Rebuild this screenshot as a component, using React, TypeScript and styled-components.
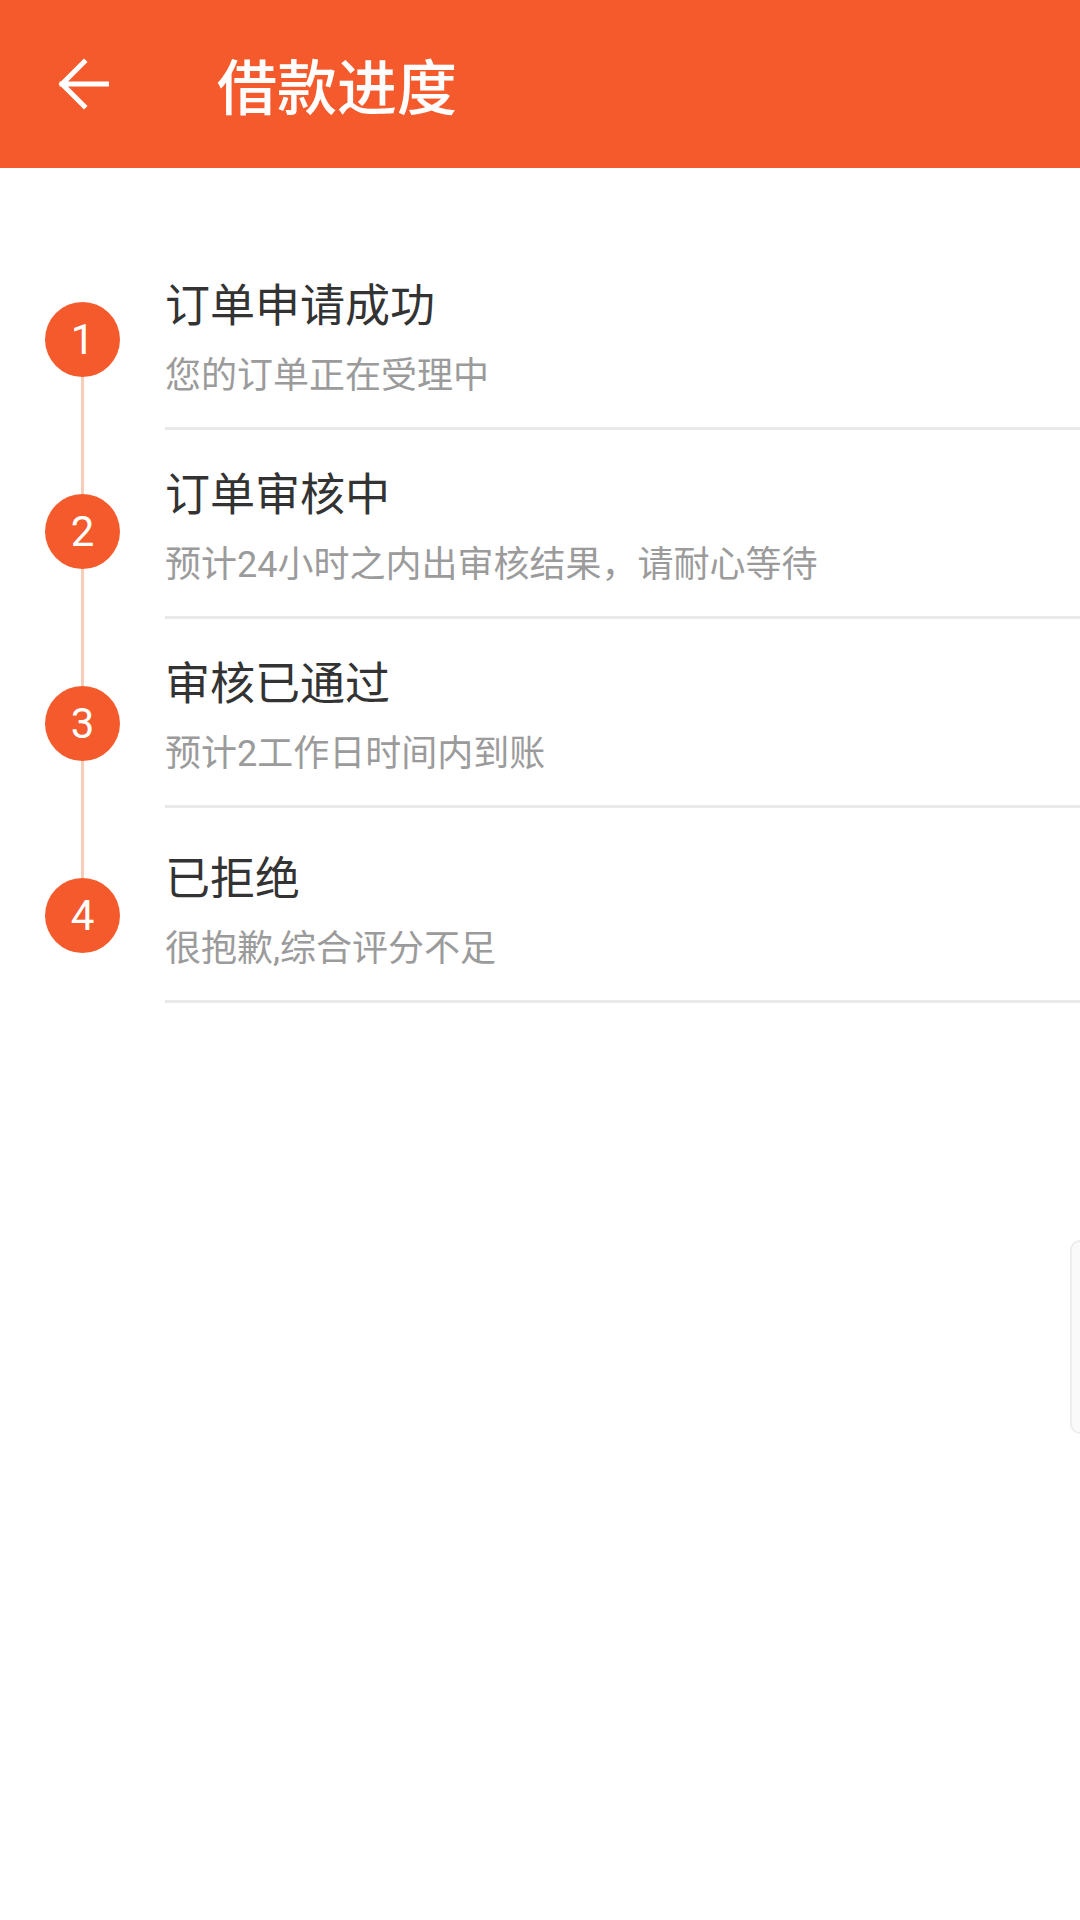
import { FC } from 'react';
import styled, { createGlobalStyle } from 'styled-components';

const GlobalStyle = createGlobalStyle`
  html, body {
    margin: 0;
    padding: 0;
    background: #ffffff;
  }
  body {
    font-family: Roboto, "Noto Sans CJK SC", "Noto Sans", sans-serif;
  }
`;

const ORANGE = '#f45a2c';

const Page = styled.div`
  position: relative;
  width: 1080px;
  min-height: 1920px;
  background: #ffffff;
  overflow: hidden;
`;

const Toolbar = styled.header`
  height: 168px;
  background: ${ORANGE};
  display: flex;
  align-items: center;
  box-sizing: border-box;
  padding-left: 57px;
`;

const BackButton = styled.button`
  width: 52px;
  height: 52px;
  padding: 0;
  border: none;
  background: transparent;
  display: flex;
  align-items: center;
  justify-content: center;
  margin-right: 108px;
`;

const Title = styled.h1`
  margin: 0;
  color: #ffffff;
  font-family: "Noto Sans CJK SC", sans-serif;
  font-size: 60px;
  font-weight: 500;
  line-height: 1;
`;

const StepList = styled.div`
  padding-top: 73px;
  display: flex;
  flex-direction: column;
`;

const Row = styled.div`
  display: flex;
`;

const Rail = styled.div`
  width: 165px;
  flex-shrink: 0;
  display: flex;
  flex-direction: column;
  align-items: center;
`;

const Line = styled.div<{ $visible: boolean; $height?: number }>`
  width: 3px;
  background: ${(p) => (p.$visible ? '#f8cdb8' : 'transparent')};
  ${(p) => (p.$height !== undefined ? `height: ${p.$height}px;` : 'flex: 1;')}
`;

const Circle = styled.div`
  width: 75px;
  height: 75px;
  border-radius: 50%;
  background: ${ORANGE};
  color: #ffffff;
  display: flex;
  align-items: center;
  justify-content: center;
  font-family: Roboto, sans-serif;
  font-size: 42px;
  flex-shrink: 0;
`;

const Body = styled.div<{ $top: number }>`
  flex: 1;
  padding-top: ${(p) => p.$top}px;
  padding-bottom: 31px;
  border-bottom: 3px solid #e9e9e9;
  display: flex;
  flex-direction: column;
`;

const StepTitle = styled.div`
  font-family: "Noto Sans CJK SC", sans-serif;
  font-size: 45px;
  line-height: 44px;
  color: #333333;
`;

const StepDesc = styled.div`
  margin-top: 31px;
  font-family: Roboto, "Noto Sans CJK SC", sans-serif;
  font-size: 36px;
  line-height: 40px;
  color: #9b9b9b;
`;

const SideTab = styled.div`
  position: absolute;
  left: 1070px;
  top: 1240px;
  width: 30px;
  height: 190px;
  border: 2px solid #ededed;
  border-radius: 10px;
  background: #fafafa;
`;

const steps = [
  { title: '订单申请成功', desc: '您的订单正在受理中', top: 40 },
  { title: '订单审核中', desc: '预计24小时之内出审核结果，请耐心等待', top: 40 },
  { title: '审核已通过', desc: '预计2工作日时间内到账', top: 40 },
  { title: '已拒绝', desc: '很抱歉,综合评分不足', top: 46 },
];

const BackArrow: FC = () => (
  <svg width="52" height="52" viewBox="0 0 52 52" fill="none">
    <path
      d="M5 26 H50 M27 4 L5 26 L27 48"
      stroke="#ffffff"
      strokeWidth="5"
      strokeLinecap="square"
      strokeLinejoin="miter"
    />
  </svg>
);

const App: FC = () => {
  return (
    <Page>
      <GlobalStyle />
      <Toolbar>
        <BackButton aria-label="back">
          <BackArrow />
        </BackButton>
        <Title>借款进度</Title>
      </Toolbar>
      <StepList>
        {steps.map((step, i) => (
          <Row key={step.title}>
            <Rail>
              <Line $visible={i > 0} $height={61 + i * 3} />
              <Circle>{i + 1}</Circle>
              <Line $visible={i < steps.length - 1} />
            </Rail>
            <Body $top={step.top}>
              <StepTitle>{step.title}</StepTitle>
              <StepDesc>{step.desc}</StepDesc>
            </Body>
          </Row>
        ))}
      </StepList>
      <SideTab />
    </Page>
  );
};

export default App;
